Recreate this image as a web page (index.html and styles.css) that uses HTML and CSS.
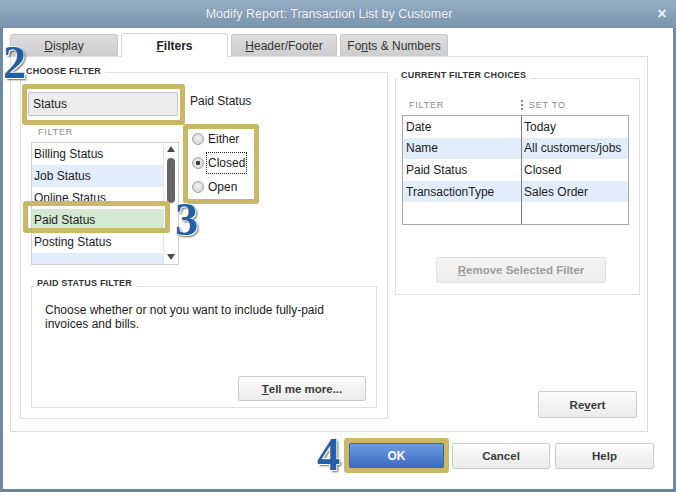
FILE: index.html
```html
<!DOCTYPE html>
<html>
<head>
<meta charset="utf-8">
<link rel="stylesheet" href="styles.css">
</head>
<body>
<div class="window">
  <div class="titlebar">
    <span class="title">Modify Report: Transaction List by Customer</span>
    <span class="close">×</span>
  </div>
  <div class="content">
    <div class="tabs">
      <div class="tab t1"><u>D</u>isplay</div>
      <div class="tab t2 active"><u>F</u>ilters</div>
      <div class="tab t3"><u>H</u>eader/Footer</div>
      <div class="tab t4">Fo<u>n</u>ts &amp; Numbers</div>
    </div>
    <div class="panel">
      <fieldset class="group choose">
        <legend>CHOOSE FILTER</legend>
        <div class="top-row">
          <div class="hl hl-status"><div class="input">Status</div></div>
          <div class="paid-label">Paid Status</div>
        </div>
        <div class="mid-row">
          <div class="list-col">
            <div class="col-label">FILTER</div>
            <div class="listbox">
              <div class="items">
                <div class="item">Billing Status</div>
                <div class="item alt">Job Status</div>
                <div class="item">Online Status</div>
                <div class="item sel">Paid Status</div>
                <div class="item">Posting Status</div>
                <div class="item alt"></div>
              </div>
              <div class="scrollbar">
                <span class="arrow up"></span>
                <span class="thumb"></span>
                <span class="arrow down"></span>
              </div>
            </div>
          </div>
          <div class="hl hl-radios">
            <div class="radio"><span class="circle"></span><span>Either</span></div>
            <div class="radio"><span class="circle checked"></span><span class="focus">Closed</span></div>
            <div class="radio"><span class="circle"></span><span>Open</span></div>
          </div>
        </div>
        <fieldset class="group paid">
          <legend>PAID STATUS FILTER</legend>
          <div class="paid-body">
            <p class="desc">Choose whether or not you want to include fully-paid<br>invoices and bills.</p>
            <button class="btn tell"><u>T</u>ell me more...</button>
          </div>
        </fieldset>
      </fieldset>
      <div class="right-col">
        <fieldset class="group current">
          <legend>CURRENT FILTER CHOICES</legend>
          <div class="thead">
            <span class="th1">FILTER</span>
            <span class="dots"></span>
            <span class="th2">SET TO</span>
          </div>
          <div class="table">
            <div class="row"><span class="c1">Date</span><span class="c2">Today</span></div>
            <div class="row alt"><span class="c1">Name</span><span class="c2">All customers/jobs</span></div>
            <div class="row"><span class="c1">Paid Status</span><span class="c2">Closed</span></div>
            <div class="row alt"><span class="c1">TransactionType</span><span class="c2">Sales Order</span></div>
            <div class="row"><span class="c1"></span><span class="c2"></span></div>
          </div>
          <button class="btn remove" disabled><u>R</u>emove Selected Filter</button>
        </fieldset>
        <button class="btn revert">Re<u>v</u>ert</button>
      </div>
    </div>
    <div class="footer">
      <div class="hl hl-ok"><button class="btn ok">OK</button></div>
      <button class="btn cancel">Cancel</button>
      <button class="btn help">Help</button>
    </div>
  </div>
  <div class="hl hl-row"></div>
  <div class="num n2">2</div>
  <div class="num n3">3</div>
  <div class="num n4">4</div>
</div>
</body>
</html>
```
FILE: styles.css
```css
* { box-sizing: border-box; }

html, body {
  margin: 0;
  padding: 0;
}

body {
  width: 676px;
  height: 492px;
  overflow: hidden;
  font-family: "Liberation Sans", Arial, sans-serif;
  font-size: 12px;
  line-height: 14px;
  color: #1c1c1c;
  background: #6f8aa4;
}

.window {
  position: relative;
  width: 676px;
  height: 492px;
  display: flex;
  flex-direction: column;
  background: #ffffff;
  border-left: 3px solid #6f8aa4;
  border-right: 3px solid #6f8aa4;
  border-bottom: 3px solid #6a859f;
}

/* title bar */
.titlebar {
  height: 28px;
  margin: 0 -3px;
  flex: none;
  display: flex;
  align-items: center;
  background: linear-gradient(#95adc4, #7a94ad);
  color: #f6f8fb;
}
.title {
  flex: 1;
  text-align: center;
  font-size: 12.5px;
  padding-left: 10px;
  text-shadow: 0 0 1px rgba(60, 80, 100, .4);
}
.close {
  width: 28px;
  text-align: center;
  font-size: 16px;
  font-weight: bold;
  color: #eef2f6;
}

.content {
  flex: 1;
  display: flex;
  flex-direction: column;
  padding: 6px 0 0 7px;
}

/* tabs */
.tabs {
  display: flex;
  gap: 3px;
  height: 22px;
  align-items: flex-end;
}
.tab {
  width: 107px;
  height: 22px;
  display: flex;
  align-items: center;
  justify-content: center;
  background: linear-gradient(#dedede, #cdcdcd);
  border: 1px solid #c6c6c6;
  border-bottom: none;
  border-radius: 3px 3px 0 0;
  color: #333;
  font-size: 12px;
}
.tab.t1 { width: 108px; }
.tab.t3 { width: 106px; }
.tab.t4 { width: 108px; }
.tab.active {
  height: 24px;
  margin-bottom: -1px;
  background: #ffffff;
  border-color: #d6d6d6;
  font-weight: bold;
  color: #222;
  position: relative;
  z-index: 1;
}

/* panel */
.panel {
  width: 638px;
  height: 376px;
  flex: none;
  border: 1px solid #dcdcdc;
  display: flex;
}

.group {
  margin: 0;
  padding: 0;
  border: 1px solid #e0e0e0;
  min-width: 0;
}
.group > legend {
  font-size: 9px;
  font-weight: bold;
  line-height: 12px;
  color: #333;
  letter-spacing: 0.2px;
  padding: 0 4px 0 3px;
  margin-left: 2px;
}

/* choose filter */
.choose {
  width: 368px;
  margin: 8px 0 0 9px;
  align-self: flex-start;
  padding-bottom: 10px;
  display: flex;
  flex-direction: column;
}
.choose > legend { padding-bottom: 2px; }

.hl {
  border: 5px solid #cab866;
  border-radius: 3px;
  background: #fff;
}

.top-row {
  display: flex;
  margin: 5px 0 0 1px;
}
.hl-status {
  width: 163px;
  height: 41px;
  padding: 3px 2px 4px 1px;
  display: flex;
}
.input {
  flex: 1;
  display: flex;
  align-items: center;
  padding-left: 4px;
  background: #ececec;
  border: 1px solid #c4c4c4;
  border-radius: 2px;
  color: #1c1c1c;
}
.paid-label {
  margin: 10px 0 0 5px;
}

.mid-row {
  display: flex;
  margin-top: -1px;
}
.list-col {
  margin-left: 10px;
}
.col-label {
  margin-top: 2px;
  padding-left: 7px;
  font-size: 9px;
  line-height: 12px;
  letter-spacing: 0.8px;
  color: #8c8c8c;
}
.listbox {
  margin-top: 4px;
  width: 148px;
  height: 123px;
  border: 1px solid #d0d0d0;
  display: flex;
  overflow: hidden;
}
.items {
  flex: 1;
  overflow: hidden;
  border-right: 1px solid #e6e6e6;
}
.item {
  height: 22px;
  line-height: 22px;
  padding-left: 2px;
  white-space: nowrap;
}
.item.alt { background: #e2edfb; }
.item.sel { background: #d3e9d2; }

.scrollbar {
  width: 14px;
  display: flex;
  flex-direction: column;
  align-items: center;
  padding: 3px 0 4px;
}
.arrow {
  width: 0;
  height: 0;
  border-left: 4px solid transparent;
  border-right: 4px solid transparent;
}
.arrow.up { border-bottom: 6px solid #4a4a4a; }
.arrow.down { border-top: 6px solid #4a4a4a; margin-top: auto; }
.thumb {
  width: 8px;
  height: 45px;
  margin-top: 6px;
  background: #666666;
  border-radius: 4px;
}

.hl-radios {
  width: 76px;
  height: 80px;
  margin-left: 4px;
  padding: 0 0 0 4px;
  display: flex;
  flex-direction: column;
  gap: 4px;
}
.radio {
  height: 20px;
  display: flex;
  align-items: center;
}
.circle {
  width: 12px;
  height: 12px;
  border-radius: 50%;
  border: 1px solid #a2a2a2;
  background: radial-gradient(circle at 50% 40%, #f0f0f0, #cdcdcd);
  margin-right: 4px;
  flex: none;
}
.circle.checked {
  background: radial-gradient(circle, #3c3c3c 0 2px, #ececec 2.6px, #cbcbcb 100%);
}
.focus {
  outline: 1px dotted #222;
  outline-offset: 0;
  padding: 3px 1px;
  margin-left: -1px;
}

/* paid status filter */
.paid {
  width: 346px;
  height: 131px;
  margin: 12px 0 0 10px;
}
.paid > legend { padding-bottom: 6px; }
.paid-body {
  display: flex;
  flex-direction: column;
}
.desc {
  margin: 8px 0 0 13px;
  line-height: 14px;
}

.btn {
  font-family: "Liberation Sans", Arial, sans-serif;
  font-size: 11.5px;
  font-weight: bold;
  color: #3a3a3a;
  background: linear-gradient(#fcfcfc, #ebebeb);
  border: 1px solid #cacaca;
  border-radius: 2px;
  padding: 0;
  display: flex;
  align-items: center;
  justify-content: center;
}
.tell {
  width: 128px;
  height: 25px;
  margin: 45px 10px 0 auto;
}

/* right column */
.right-col {
  width: 252px;
  margin-left: 7px;
  display: flex;
  flex-direction: column;
}
.current {
  width: 245px;
  margin-top: 12px;
  padding-bottom: 11px;
}
.current > legend { padding-bottom: 7px; }
.thead {
  display: flex;
  align-items: center;
  height: 12px;
  margin-top: 11px;
  font-size: 9px;
  letter-spacing: 0.8px;
  color: #8c8c8c;
}
.th1 { margin-left: 13px; width: 112px; }
.dots {
  width: 0;
  height: 10px;
  border-left: 2px dotted #8a8a8a;
}
.th2 { margin-left: 6px; }
.table {
  margin: 4px 0 0 6px;
  width: 227px;
  height: 110px;
  border: 1px solid #a9a9a9;
  display: grid;
  grid-template-rows: repeat(5, 1fr);
}
.row {
  display: grid;
  grid-template-columns: 119px 1fr;
}
.row.alt { background: #e2edfb; }
.c1, .c2 {
  display: flex;
  align-items: center;
  white-space: nowrap;
}
.c1 { padding-left: 3px; border-right: 1px solid #7c7c7c; }
.c2 { padding-left: 2px; }

.remove {
  width: 170px;
  height: 26px;
  margin: 32px 0 0 40px;
  color: #9b9b9b;
  background: linear-gradient(#f4f4f4, #ececec);
  border-color: #e0e0e0;
}
.revert {
  width: 99px;
  height: 27px;
  margin: auto 10px 13px auto;
}

/* footer */
.footer {
  display: flex;
  justify-content: flex-end;
  align-items: center;
  margin-top: 6px;
  padding-right: 19px;
  gap: 3px;
}
.hl-ok {
  width: 105px;
  height: 35px;
  padding: 0;
  display: flex;
}
.ok {
  flex: 1;
  color: #ffffff;
  font-size: 12px;
  background: linear-gradient(#6d9be0, #3e6cc2);
  border: 1px solid #3b63a9;
  border-radius: 1px;
}
.cancel {
  width: 98px;
  height: 26px;
}
.help {
  width: 99px;
  height: 26px;
  margin-left: 2px;
}

/* overlay annotations */
.hl-row {
  position: absolute;
  left: 20px;
  top: 201px;
  width: 147px;
  height: 32px;
  background: transparent;
}
.num {
  position: absolute;
  font-family: "Liberation Serif", "Times New Roman", serif;
  font-weight: bold;
  font-size: 46px;
  line-height: 46px;
  color: #1f60a8;
  text-shadow: -1px -1px 0 #ffffff, 1px 1px 0 #ffffff, 2px 2px 2px rgba(0, 0, 0, .6);
}
.n2 { left: 0; top: 40px; }
.n3 { left: 172px; top: 197px; }
.n4 { left: 314px; top: 432px; }
```
